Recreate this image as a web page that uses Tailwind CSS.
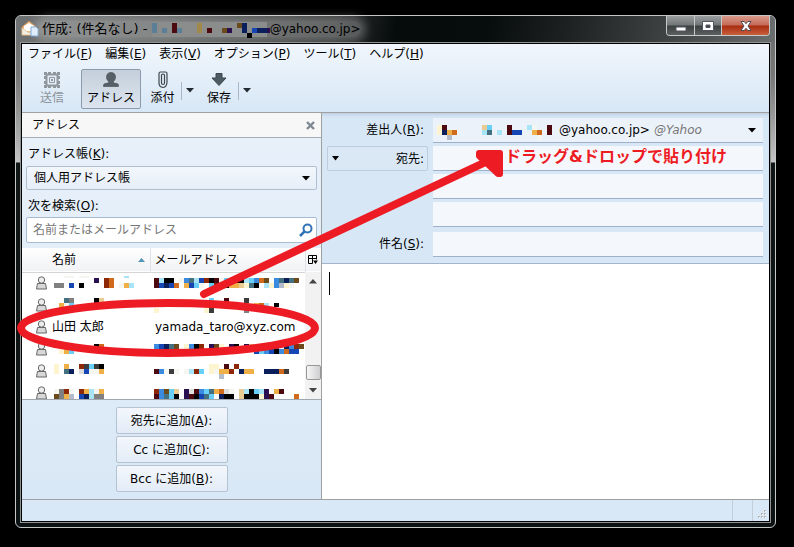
<!DOCTYPE html>
<html lang="ja">
<head>
<meta charset="utf-8">
<title>作成: (件名なし)</title>
<script src="https://cdn.jsdelivr.net/npm/@tailwindcss/browser@4"></script>
</head>
<body class="relative flex h-screen flex-col bg-black pt-[15px] pr-[18px] pb-[14px] pl-[15px] font-['DejaVu_Sans','Noto_Sans_CJK_JP',sans-serif] text-[12px] leading-[20px] text-black">
<div class="relative mb-[5px] flex min-h-0 grow flex-col rounded-[6px] border border-[#c4c8c8] bg-[linear-gradient(#6a6d6d_0px,#777_60px,#aaa_120px,#c4c4c4_146px,#101616_147px,#0c1212_100%)] px-[4px] pb-[4px]">
  <header class="-mx-[4px] flex h-[26px] shrink-0 items-center rounded-t-[5px] bg-[linear-gradient(100deg,#6f7272_0%,#5a5d5d_20%,#303333_42%,#060b0b_50%,#070c0c_62%,#1c2020_72%,#3a3e3e_84%,#6a6e6e_100%)] pl-[5px]">
    <svg class="shrink-0" width="18" height="18" viewBox="0 0 18 18" aria-hidden="true"><path d="M1 7 8 1l7 6v8H1z" fill="#e9b982" stroke="#c98c58"/><path d="M3 6 8 3l5 3v5H3z" fill="#fff"/><path d="m1 8 7 5 7-5v7H1z" fill="#f3eee4" stroke="#d8bb94" stroke-width=".7"/><path d="M10 7h5l2 2v7h-7z" fill="#dcecfb" stroke="#7ba6d4"/></svg>
    <h1 class="flex h-[16px] items-center rounded-[8px] bg-white/25 pl-[3px] text-[13px] whitespace-pre shadow-[0_0_8px_5px_rgba(255,255,255,0.25)]">作成: (件名なし) - <svg width="118" height="20" viewBox="0 0 118 20" data-mosaic="title" aria-hidden="true"></svg><span class="text-[12px]">@yahoo.co.jp&gt;</span></h1>
    <div class="mr-[5px] ml-auto flex h-[20px] self-start overflow-hidden rounded-b-[4px] border border-t-0 border-[#c5c9c9]">
      <button aria-label="最小化" class="flex w-[28px] items-center justify-center border-r border-[#c5c9c9] bg-[linear-gradient(#9a9e9e_0%,#707575_48%,#3a3f3f_52%,#5c6060_100%)]"><svg width="14" height="12" viewBox="0 0 14 12"><path d="M2 7h10v4H2z" fill="#fff" stroke="#505560"/></svg></button>
      <button aria-label="最大化" class="flex w-[27px] items-center justify-center border-r border-[#c5c9c9] bg-[linear-gradient(#9a9e9e_0%,#707575_48%,#3a3f3f_52%,#5c6060_100%)]"><svg width="14" height="12" viewBox="0 0 14 12"><path d="M1.500 1.500h11v9h-11zM5 5v2.500h4V5z" fill="#fff" fill-rule="evenodd" stroke="#505560"/></svg></button>
      <button aria-label="閉じる" class="flex w-[47px] items-center justify-center bg-[linear-gradient(#d99a8c_0%,#c46a55_48%,#a82c10_52%,#c8603c_100%)]"><svg width="14" height="12" viewBox="0 0 14 12"><path d="M2 1.500h3.200L7 3.700l1.800-2.200H12L9 6l3 4.500H8.800L7 8.300l-1.800 2.200H2L5 6z" fill="#fff" stroke="#504a58"/></svg></button>
    </div>
  </header>

  <div class="flex min-h-0 grow flex-col border border-[#8e9494]">
  <div class="flex min-h-0 grow flex-col border border-black bg-[#d9e8f6]">
    <div class="flex h-[68px] shrink-0 flex-col bg-gradient-to-b from-[#f1f6fc] to-[#d7e7f6]">
      <nav class="flex gap-[13px] pl-[6px] whitespace-nowrap">
        <button>ファイル(<u>F</u>)</button><button>編集(<u>E</u>)</button><button>表示(<u>V</u>)</button><button>オプション(<u>P</u>)</button><button>ツール(<u>T</u>)</button><button>ヘルプ(<u>H</u>)</button>
      </nav>
      <div role="toolbar" class="flex h-[48px] items-start pt-[5px] pl-[8px] whitespace-nowrap">
        <button disabled class="flex h-[40px] w-[44px] flex-col items-center pt-[2px] text-[#8d949b]">
          <svg width="18" height="18" viewBox="0 0 18 18"><path d="M3.500 3.500h11v11h-11z" fill="none" stroke="#8f979d" stroke-width="2"/><path d="M1 1h3v3H1zm4 0h3v3H5zm5 0h3v3h-3zm4 0h3v3h-3zM1 5h3v3H1zm0 5h3v3H1zm13-5h3v3h-3zm0 5h3v3h-3zM1 14h3v3H1zm4 0h3v3H5zm5 0h3v3h-3zm4 0h3v3h-3z" fill="#8f979d"/><path d="M6.500 6.500h5v5h-5z" fill="none" stroke="#8f979d"/><path d="M8 8h2v2H8z" fill="#8f979d"/></svg>
          <span class="leading-[18px]">送信</span>
        </button>
        <button aria-pressed="true" class="ml-[7px] flex h-[40px] w-[60px] flex-col items-center rounded-[2px] border border-[#8c9bac] bg-gradient-to-b from-[#c5cfdb] to-[#dce5ef] pt-px">
          <svg width="18" height="18" viewBox="0 0 18 18"><path d="M9 1.500c3 0 4.500 2 4.500 4.500 0 2.200-1 3.600-2.200 4.600v1.200l4.200 1c.8.300 1 1 1 2.700h-15c0-1.700.2-2.400 1-2.700l4.200-1v-1.200C5.500 9.600 4.500 8.200 4.500 6c0-2.500 1.500-4.500 4.500-4.500z" fill="#566066" stroke="#3f484e" stroke-width=".6"/></svg>
          <span class="leading-[18px]">アドレス</span>
        </button>
        <button class="ml-[3px] flex h-[40px] w-[37px] flex-col items-center pt-[2px]">
          <svg width="18" height="18" viewBox="0 0 18 18"><path d="M5 12V2.500Q5 1 6.500 1h5Q13 1 13 2.500V11q0 5-4 5.500Q5 16 5 12M7.500 12V4Q7.500 3 9 3t1.500 1v8q0 1.500-1.500 1.500T7.500 12V6" fill="none" stroke="#3c474c" stroke-width="1.200"/></svg>
          <span class="leading-[18px]">添付</span>
        </button>
        <button aria-label="添付メニュー" class="flex h-[18px] w-[16px] items-center justify-center self-center border-l border-[#a9b8c8]"><svg width="8" height="5" viewBox="0 0 8 5"><path d="M0 0h8L4 4.500z" fill="#222b33"/></svg></button>
        <button class="ml-[3px] flex h-[40px] w-[38px] flex-col items-center pt-[2px]">
          <svg width="18" height="18" viewBox="0 0 18 18"><path d="M6 2.500h6V7h4L9 14.500 2 7h4z" fill="#4d5c62" stroke="#3a474d"/></svg>
          <span class="leading-[18px]">保存</span>
        </button>
        <button aria-label="保存メニュー" class="flex h-[18px] w-[16px] items-center justify-center self-center border-l border-[#a9b8c8]"><svg width="8" height="5" viewBox="0 0 8 5"><path d="M0 0h8L4 4.500z" fill="#222b33"/></svg></button>
      </div>
    </div>

    <main class="flex min-h-0 grow border-y border-[#a0a0a0]">
      <aside class="flex w-[300px] shrink-0 flex-col border-r border-[#a0a0a0] bg-gradient-to-b from-[#e9f1fa] to-[#d9e8f6]">
        <div class="flex h-[25px] shrink-0 items-center justify-between border-b border-[#a5afb9] bg-[#f7f7f7] pr-[6px] pl-[10px]">
          <h2>アドレス</h2>
          <button aria-label="閉じる"><svg width="9" height="9" viewBox="0 0 9 9"><path d="m1 1 7 7M8 1 1 8" stroke="#7d8892" stroke-width="2.400"/></svg></button>
        </div>
        <div class="flex shrink-0 flex-col px-[4px] pt-[6px]">
          <label for="book" class="px-[2px]">アドレス帳(<u>K</u>):</label>
          <div class="relative mt-[2px]">
            <select id="book" class="h-[24px] w-full appearance-none rounded-[2px] border border-[#aebfd2] bg-gradient-to-b from-[#f3f7fc] to-[#e6eef8] px-[7px]"><option>個人用アドレス帳</option></select>
            <svg class="pointer-events-none absolute top-[10px] right-[7px]" width="8" height="5" viewBox="0 0 8 5"><path d="M0 0h8L4 4.500z"/></svg>
          </div>
          <label for="find" class="mt-[6px] px-[2px]">次を検索(<u>O</u>):</label>
          <div class="relative mt-[1px]">
            <input id="find" type="text" placeholder="名前またはメールアドレス" class="h-[26px] w-full rounded-[2px] border border-[#a8bbd0] bg-white px-[6px] placeholder:text-[#777]">
            <svg class="pointer-events-none absolute top-[6px] right-[4px]" width="14" height="14" viewBox="0 0 14 14"><circle cx="8.500" cy="5.500" r="4" fill="none" stroke="#3173b5" stroke-width="2"/><path d="m5.500 8.500-4.500 4.500" stroke="#3173b5" stroke-width="2.500"/></svg>
          </div>
        </div>
        <div class="relative mt-[5px] flex min-h-0 grow overflow-hidden border-b border-[#a0a9b2] bg-white">
          <table class="w-full table-fixed self-start text-left">
            <colgroup><col class="w-[30px]"><col class="w-[98px]"><col><col class="w-[16px]"></colgroup>
            <thead><tr class="h-[24px] border-b border-[#d5d5d5] bg-gradient-to-b from-white to-[#f1f2f4]">
              <th></th>
              <th class="font-normal"><span class="flex items-center justify-between pr-[5px]">名前<svg width="7" height="4" viewBox="0 0 7 4"><path d="M3.500 0 7 4H0z" fill="#5293b8"/></svg></span></th>
              <th class="border-l border-[#dfe3e8] pl-[4px] font-normal">メールアドレス</th>
              <th class="border-l border-[#dfe3e8]"><button aria-label="列の表示" class="flex pl-[1px]"><svg width="12" height="11" viewBox="0 0 12 11"><path d="M5.500 9.500h-4v-8h8v4M1.500 4.500h8M5.500 1.500v8" fill="none" stroke="#000"/><path d="M6 6.500h5L8.500 10z"/></svg></button></th>
            </tr></thead>
            <tbody>
              <tr class="h-[22px]"><td data-person></td><td></td><td></td></tr>
              <tr class="h-[22px]"><td data-person></td><td></td><td></td></tr>
              <tr class="h-[22px]"><td data-person></td><td>山田 太郎</td><td class="pl-[5px] whitespace-nowrap">yamada_taro@xyz.com</td></tr>
              <tr class="h-[22px]"><td data-person></td><td></td><td></td></tr>
              <tr class="h-[22px]"><td data-person></td><td></td><td></td></tr>
              <tr class="h-[22px]"><td data-person></td><td></td><td></td></tr>
            </tbody>
          </table>
          <svg class="pointer-events-none absolute top-[24px] left-0" width="282" height="128" viewBox="22 272 282 128" data-mosaic="list" aria-hidden="true"></svg>
          <div class="absolute top-[24px] right-0 bottom-0 flex w-[16px] flex-col items-center bg-[#f2f2f2]">
            <svg class="mt-[7px]" width="8" height="5" viewBox="0 0 8 5"><path d="M4 0 8 4.500H0z" fill="#444"/></svg>
            <div class="mt-auto h-[15px] w-[15px] rounded-[2px] border border-[#979797] bg-gradient-to-r from-[#f6f6f6] to-[#cfcfd1]"></div>
            <svg class="mt-[8px] mb-[6px]" width="8" height="5" viewBox="0 0 8 5"><path d="M0 0h8L4 4.500z" fill="#444"/></svg>
          </div>
        </div>
        <div class="flex shrink-0 flex-col items-center gap-[2px] pt-[7px] pb-[7px]">
          <button class="h-[27px] w-[112px] rounded-[2px] border border-[#b4c2d1] bg-gradient-to-b from-[#f3f7fc] to-[#e3ecf7]">宛先に追加(<u>A</u>):</button>
          <button class="h-[27px] w-[112px] rounded-[2px] border border-[#b4c2d1] bg-gradient-to-b from-[#f3f7fc] to-[#e3ecf7]">Cc に追加(<u>C</u>):</button>
          <button class="h-[27px] w-[112px] rounded-[2px] border border-[#b4c2d1] bg-gradient-to-b from-[#f3f7fc] to-[#e3ecf7]">Bcc に追加(<u>B</u>):</button>
        </div>
      </aside>

      <section class="flex min-w-0 grow flex-col">
        <div class="flex shrink-0 flex-col gap-[3px] border-b border-[#a3b5ca] bg-[#d7e7f6] pt-[5px] pr-[6px] pb-[6px] pl-[5px] shadow-[inset_0_4px_4px_-3px_#b4c6da]">
          <div class="flex gap-[5px]">
            <label for="from" class="w-[101px] shrink-0 pr-[4px] text-right leading-[25px]">差出人(<u>R</u>):</label>
            <div class="relative grow">
              <select id="from" class="block h-[25px] w-full appearance-none border-b border-[#9fb1ca] bg-[#ecf2fa] pl-[126px]"><option>@yahoo.co.jp&gt;</option></select>
              <svg class="pointer-events-none absolute top-0 left-0" width="122" height="25" viewBox="433 118 122 25" data-mosaic="from" aria-hidden="true"></svg>
              <span class="pointer-events-none absolute top-[2px] left-[221px] text-[#777] italic">@Yahoo</span>
              <svg class="pointer-events-none absolute top-[10px] right-[7px]" width="8" height="5" viewBox="0 0 8 5"><path d="M0 0h8L4 4.500z"/></svg>
            </div>
          </div>
          <div class="flex gap-[5px]">
            <div class="relative w-[101px] shrink-0">
              <select aria-label="宛先の種類" class="block h-[25px] w-full appearance-none rounded-[2px] border border-[#bccde0] bg-[#dae8f6] pr-[3px] [text-align-last:right]"><option>宛先:</option></select>
              <svg class="pointer-events-none absolute top-[10px] left-[5px]" width="7" height="5" viewBox="0 0 7 5"><path d="M0 0h7L3.500 4.500z"/></svg>
            </div>
            <input type="text" aria-label="宛先" class="h-[25px] min-w-0 grow border-b border-[#9fb1ca] bg-[#f4f8fc]">
          </div>
          <input type="text" aria-label="宛先 2" class="ml-[106px] h-[25px] border-b border-[#9fb1ca] bg-[#f4f8fc]">
          <input type="text" aria-label="宛先 3" class="ml-[106px] h-[25px] border-b border-[#9fb1ca] bg-[#f4f8fc]">
          <div class="mt-[2px] flex gap-[5px]">
            <label for="subject" class="w-[101px] shrink-0 pr-[4px] text-right leading-[25px]">件名(<u>S</u>):</label>
            <input id="subject" type="text" class="h-[25px] min-w-0 grow border-b border-[#9fb1ca] bg-[#f4f8fc]">
          </div>
        </div>
        <div class="relative flex grow bg-white">
          <textarea aria-label="本文" class="grow resize-none p-[8px] outline-none"></textarea>
          <span class="pointer-events-none absolute top-[8px] left-[7px] h-[23px] w-px bg-black"></span>
        </div>
      </section>
    </main>
    <footer class="flex h-[21px] shrink-0 justify-end">
      <span class="w-[20px] border-l border-[#c3ced9]"></span>
      <span class="flex w-[17px] items-end justify-end border-l border-[#c3ced9] p-[2px]"><svg width="9" height="9" viewBox="0 0 9 9"><path d="M6 0h2v2H6zM3 3h2v2H3zm3 0h2v2H6zM0 6h2v2H0zm3 0h2v2H3zm3 0h2v2H6z" fill="#b4b4b4"/><path d="M7 1h1v1H7zM4 4h1v1H4zm3 0h1v1H7zM1 7h1v1H1zm3 0h1v1H4zm3 0h1v1H7z" fill="#fff"/></svg></span>
    </footer>
  </div>
  </div>
</div>

<svg class="pointer-events-none absolute top-0 left-0" width="794" height="547" viewBox="0 0 794 547" aria-hidden="true">
  <ellipse cx="168" cy="328" rx="147" ry="25" fill="none" stroke="#ed1c24" stroke-width="8"/>
  <path d="M204 294 490 160" stroke="#ed1c24" stroke-width="8" stroke-linecap="round"/>
  <path d="M479 153h21v21h-2l-19-18z" fill="#ed1c24" stroke="#ed1c24" stroke-width="6" stroke-linejoin="round"/>
</svg>
<p class="pointer-events-none absolute top-[147px] left-[505px] text-[16px] font-bold whitespace-nowrap text-[#ed1c24]">ドラッグ&amp;ドロップで貼り付け</p>

<script>
// Colour key for the blocks that hide private names and addresses.
const colours = {k:'#000000',m:'#4c0a10',b:'#1546b4',n:'#0a1f5c',s:'#3a8ae0',c:'#68d0f8',p:'#a8e4f8',g:'#808080',d:'#3c3c3c',o:'#d06a1c',y:'#f0b048',t:'#e8cc94',l:'#fdf4d0',r:'#8c2808',w:'#f6f6f0',q:'#447080',e:'#dddddd',u:'#2a1050',B:'#6b4a1c',G:'#b4bccc',z:'#5b7f97',h:'#8b8d8c',Y:'#a08848'};
// Each strip: left, top, height, cells ('.' leaves a gap).
const strips = {
  list: [
    [54,276,2,'..ww.ww.......p'],[94,278,5,'u.ro'],[54,283,5,'gg.b.k....ro.wyp'],
    [154,278,5,'mpkk.wsqpbrkmwcwkkpcsoB.sqnqB'],[154,283,5,'mbnbo.ybcw.crkkyytlqk.plsGlw'],
    [64,298,5,'qg....kt'],[59,303,5,'ywc'],
    [154,298,5,'...........c..m...d'],[154,303,4,'.............wsmw..lyop.k'],[154,308,5,'l.........ld......g'],
    [54,344,5,'..w.....ko'],[59,349,5,'lyc....wwy'],
    [154,344,5,'sbnqB.lskr.uBl.uk.utpy.kb.nsrB'],[154,349,5,'....................bcsbksobb'],
    [54,364,5,'l.y..rdcdk'],[54,369,5,'l.qn.ebwwy'],
    [154,364,5,'...........ll.m.r'],[154,369,5,'mswdw.wprc.lwyyr.nyy..nnnod'],[154,374,5,'.............G'],
    [54,389,5,'wgrw.rypwy'],[54,394,5,'BgyG.bnpgg'],
    [154,389,5,'rsBct.uemscqyoew.tpkcpu.ym'],[154,394,5,'msqck.umkbqc.nkk.tkkklum....o']
  ],
  from: [
    [437,125,5,'lm.......tc...m...pw'],[437,130,5,'lnyo.....pq.p.mbb..yo..'],[437,135,5,'..G.................w'],
    [547,125,10,'m']
  ],
  title: [
    [0,3,15,'hhhhhhhhhhhhhhhhhhhhhhh'],
    [0,4,5,'z...m....Y.......Bn'],[0,9,5,'z.z.mz...Y.m..Bu..n.bnnu'],[0,14,5,'...................k']
  ]
};
const ns = 'http://www.w3.org/2000/svg';
document.querySelectorAll('[data-mosaic]').forEach(svg => {
  strips[svg.dataset.mosaic].forEach(([x, y, h, cells]) => [...cells].forEach((key, i) => {
    if (key === '.') return;
    const r = document.createElementNS(ns, 'rect');
    Object.entries({x: x + i * 5, y, width: 5, height: h, fill: colours[key]}).forEach(([n, v]) => r.setAttribute(n, v));
    svg.append(r);
  }));
});
document.querySelectorAll('[data-person]').forEach(td => {
  td.innerHTML = '<svg style="margin-left:14px" width="11" height="14" viewBox="0 0 11 14"><path d="M1.500 7.500h8l1 5.500H.5z" fill="#d8d8d8" stroke="#666"/><circle cx="5.500" cy="4" r="3.200" fill="#ececec" stroke="#666"/></svg>';
});
</script>
</body>
</html>
